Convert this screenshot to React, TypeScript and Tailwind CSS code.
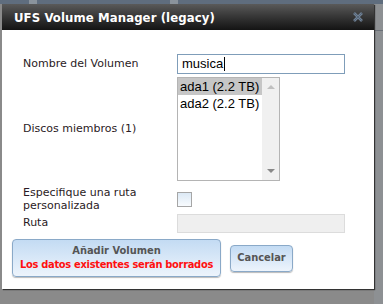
import React from "react";

export default function App() {
  const v = { fontFamily: '"DejaVu Sans", Verdana, sans-serif' };
  const vb = { fontFamily: '"DejaVu Sans Condensed", "DejaVu Sans", Tahoma, sans-serif' };
  const a = { fontFamily: '"Liberation Sans", Arial, sans-serif' };
  return (
    <div className="w-[383px] h-[304px] bg-[#8a8a8a] overflow-hidden relative">
      <div className="h-[4px] bg-[#5f6d7e] flex">
        <div className="w-[29px]" />
        <div className="w-[8px] bg-[#8a939c]" />
        <div className="w-[133px]" />
        <div className="w-[8px] bg-[#8a939c]" />
      </div>
      <div className="absolute right-0 top-[4px] w-[9px] h-[300px] bg-[#8d9093]">
        <div className="mt-[26px] h-[1px] bg-[#6a7078]" />
      </div>
      <div className="ml-[2px] w-[372px] h-[285px] bg-white shadow-[1px_1px_1px_#333] relative">
        <div className="h-[26px] flex items-center justify-between pl-[12px] pr-[11px] bg-gradient-to-b from-[#5a5a5a] to-[#141414]">
          <span className="text-white font-bold text-[13px] leading-none tracking-[0.1px]" style={vb}>
            UFS Volume Manager (legacy)
          </span>
          <svg width="10" height="10" viewBox="0 0 10 10">
            <path d="M1 1 L9 9 M9 1 L1 9" stroke="#6f8196" strokeWidth="2.6" />
            <path d="M1 1 L9 9 M9 1 L1 9" stroke="#52606f" strokeWidth="0.8" />
          </svg>
        </div>
        <div className="pl-[21px] pt-[24px] text-[11px] text-[#2a1a24]" style={v}>
          <div className="grid grid-cols-[154px_1fr] items-center">
            <div className="h-[20px] flex items-center">Nombre del Volumen</div>
            <div className="h-[20px] w-[168px] border border-[#7f9db9] flex items-center pl-[4px] text-[13px] text-black" style={a}>
              musica<span className="inline-block w-[1px] h-[14px] bg-black ml-[1px]" />
            </div>
          </div>
          <div className="grid grid-cols-[154px_1fr] items-center mt-[3px]">
            <div>Discos miembros (1)</div>
            <div className="w-[103px] h-[104px] border border-[#b4b4b4] flex text-[13px] text-black" style={a}>
              <div className="flex-1 flex flex-col">
                <div className="h-[17px] bg-[#c6c6c6] pl-[2px] flex items-center">ada1 (2.2 TB)</div>
                <div className="h-[17px] pl-[2px] flex items-center">ada2 (2.2 TB)</div>
              </div>
              <div className="w-[17px] bg-[#f0f0f0] flex flex-col justify-between items-center py-[6px]">
                <svg width="8" height="5" viewBox="0 0 8 5"><path d="M0 5 L4 1 L8 5 Z" fill="#c0c0c0" /></svg>
                <svg width="8" height="5" viewBox="0 0 8 5"><path d="M0 0 L8 0 L4 4 Z" fill="#888" /></svg>
              </div>
            </div>
          </div>
          <div className="grid grid-cols-[154px_1fr] items-center mt-[5px]">
            <div className="leading-[13px]">Especifique una ruta<br />personalizada</div>
            <div className="w-[15px] h-[15px] border border-[#a6a6a6] bg-gradient-to-b from-[#dce9f5] to-[#f8fbfe]" />
          </div>
          <div className="grid grid-cols-[154px_1fr] items-center mt-[2px]">
            <div>Ruta</div>
            <div className="w-[168px] h-[19px] border border-[#dcdcdc] bg-[#efefef]" />
          </div>
          <div className="flex items-center mt-[6px] -ml-[11px] gap-[9px] font-bold" style={vb}>
            <button className="w-[209px] h-[38px] rounded-[4px] border border-[#8aa9c8] bg-gradient-to-b from-[#c3dbf3] to-[#edf4fc] shadow-[0_1px_1px_#bbb] flex flex-col items-center justify-center leading-[14px] whitespace-nowrap">
              <span className="text-[#555]">Añadir Volumen</span>
              <span className="text-[#ff1010] tracking-[-0.3px]">Los datos existentes serán borrados</span>
            </button>
            <button className="w-[63px] h-[27px] rounded-[4px] border border-[#8aa9c8] bg-gradient-to-b from-[#c3dbf3] to-[#edf4fc] shadow-[0_1px_1px_#bbb] text-[#555]">
              Cancelar
            </button>
          </div>
        </div>
      </div>
    </div>
  );
}
